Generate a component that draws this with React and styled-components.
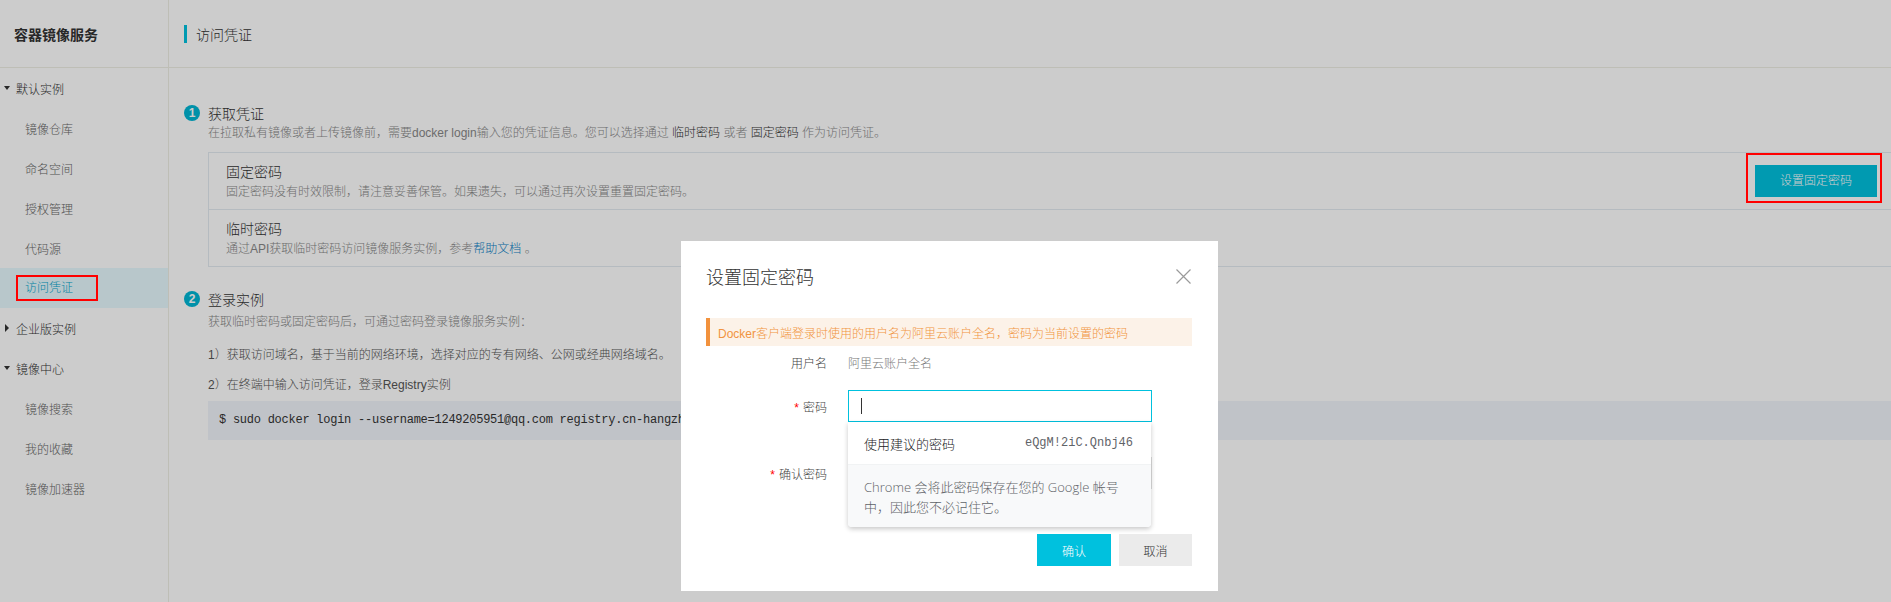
import styled, { createGlobalStyle } from 'styled-components'

const GlobalStyle = createGlobalStyle`
  * {
    box-sizing: border-box;
  }

  body {
    margin: 0;
    background: #fff;
    color: #333;
    font-family: "Liberation Sans", "Noto Sans CJK SC", sans-serif;
    font-size: 12px;
    font-weight: 300;
  }
`

const Page = styled.div`
  display: grid;
  grid-template-columns: 169px 1fr;
  height: 602px;
  overflow: hidden;
`

const Sidebar = styled.aside`
  border-right: 1px solid #eeeee4;
`

const Brand = styled.div`
  height: 68px;
  display: flex;
  align-items: center;
  padding-left: 14px;
  border-bottom: 1px solid #eeeee4;
  font-size: 14px;
  font-weight: bold;
`

const GroupRow = styled.div`
  height: 40px;
  display: flex;
  align-items: center;
  padding-left: 3px;
  gap: 6px;
  color: #333;
`

const Arrow = styled.span`
  width: 7px;
  display: flex;
  justify-content: center;

  &::before {
    content: '';
    width: 0;
    height: 0;
    ${props => props.$open
      ? `border-left: 3.5px solid transparent;
         border-right: 3.5px solid transparent;
         border-top: 4px solid #333;`
      : `border-top: 4px solid transparent;
         border-bottom: 4px solid transparent;
         border-left: 4px solid #333;`}
  }
`

const Item = styled.div`
  height: 40px;
  display: flex;
  align-items: center;
  padding-left: 25px;
  color: ${props => props.$active ? '#00a6cc' : '#666'};
  background: ${props => props.$active ? '#e7f9fe' : 'transparent'};
`

// red annotation frame, drawn above the modal mask
const Mark = styled.span`
  position: relative;
  display: inline-block;
  line-height: 12px;
  padding: ${props => props.$pad};
  margin-left: ${props => props.$shift || '0'};

  &::after {
    content: '';
    position: absolute;
    inset: 0;
    border: 2px solid #ff0000;
    z-index: 1001;
    pointer-events: none;
  }
`

const Main = styled.main`
  min-width: 0;
`

const MainHeader = styled.div`
  height: 68px;
  display: flex;
  align-items: center;
  padding-left: 15px;
  border-bottom: 1px solid #eeeee4;
  font-size: 14px;

  &::before {
    content: '';
    width: 3px;
    height: 18px;
    margin-right: 9px;
    background: #00c1de;
  }
`

const Content = styled.div`
  padding: 35px 0 0 15px;
`

const StepHead = styled.div`
  display: flex;
  align-items: center;
  gap: 8px;
  height: 20px;
  font-size: 14px;
  margin-top: ${props => props.$gap || '0'};
`

const StepNum = styled.span`
  width: 16px;
  height: 16px;
  border-radius: 50%;
  background: #00b6d4;
  color: #fff;
  font-size: 12px;
  font-weight: bold;
  display: flex;
  align-items: center;
  justify-content: center;
`

const StepBody = styled.div`
  margin-left: 24px;
`

const Desc = styled.div`
  line-height: 20px;
  color: #888;
  margin-top: ${props => props.$gap || '0'};

  b {
    font-weight: 300;
    color: #333;
  }

  a {
    color: #0a80c6;
    text-decoration: none;
  }
`

const Line = styled.div`
  line-height: 20px;
  color: #555;
  margin-top: ${props => props.$gap};
`

const Box = styled.div`
  margin-top: 9px;
  margin-right: -4px;
  border: 1px solid #e3eaf0;
`

const BoxRow = styled.div`
  display: flex;
  justify-content: space-between;
  align-items: flex-start;

  & + & {
    border-top: 1px solid #e3eaf0;
  }
`

const BoxText = styled.div`
  padding: 9px 0 7px 17px;
`

const BoxTitle = styled.div`
  font-size: 14px;
  line-height: 20px;
  color: #333;
`

const PrimaryButton = styled.button`
  width: ${props => props.$w};
  height: 32px;
  border: none;
  background: #00c1de;
  color: #fff;
  font: inherit;
  font-size: 12px;
  padding: 0;
`

const GreyButton = styled(PrimaryButton)`
  background: #ebebeb;
  color: #333;
`

const ActionFrame = styled(Mark)`
  display: flex;
  margin-right: 12px;
`

const Code = styled.div`
  margin-top: 6px;
  height: 39px;
  line-height: 39px;
  padding-left: 11px;
  background: #f1f4fa;
  font-family: "Liberation Mono", monospace;
  font-size: 12px;
  font-weight: 400;
  letter-spacing: -0.25px;
  white-space: nowrap;
  overflow: hidden;
`

const Mask = styled.div`
  position: fixed;
  inset: 0;
  z-index: 1000;
  background: rgba(0, 0, 0, 0.2);
  padding: 241px 0 0 681px;
`

const Modal = styled.div`
  width: 537px;
  height: 350px;
  background: #fff;
  padding: 23px 26px 25px 25px;
  display: flex;
  flex-direction: column;
`

const ModalHead = styled.div`
  height: 24px;
  display: flex;
  align-items: center;
  justify-content: space-between;
  font-size: 18px;
  color: #333;
`

const Alert = styled.div`
  margin-top: 30px;
  height: 28px;
  display: flex;
  align-items: center;
  padding-left: 8px;
  border-left: 4px solid #f2923d;
  background: #fcf2e8;
  color: #f19440;
`

const FormRow = styled.div`
  display: flex;
  align-items: center;
  gap: 21px;
  height: 32px;
  margin-top: ${props => props.$gap || '0'};
`

const Label = styled.div`
  width: 121px;
  text-align: right;
  color: #444;

  i {
    font-style: normal;
    color: #ff0000;
    margin-right: 4px;
  }
`

const Value = styled.div`
  color: #777;
`

const Control = styled.div`
  position: relative;
  width: 304px;
`

const Field = styled.div`
  height: 32px;
  display: flex;
  align-items: center;
  padding-left: 12px;
  border: 1px solid ${props => props.$focus ? '#00c1de' : '#dcdcdc'};
`

const Caret = styled.span`
  width: 1px;
  height: 16px;
  background: #333;
`

const Suggest = styled.div`
  position: absolute;
  top: 100%;
  left: 0;
  width: 303px;
  z-index: 2;
  background: #fff;
  border-radius: 0 0 4px 4px;
  overflow: hidden;
  box-shadow: 0 2px 5px rgba(0, 0, 0, 0.22);
  font-family: "Open Sans", "Noto Sans CJK SC", sans-serif;
  font-size: 13px;
`

const SuggestRow = styled.div`
  height: 43px;
  display: flex;
  align-items: center;
  justify-content: space-between;
  padding: 0 18px 0 16px;
  color: #202124;
  border-bottom: 1px solid #f1f3f4;
`

const Pass = styled.span`
  font-family: "Liberation Mono", monospace;
  font-size: 12px;
  font-weight: 400;
  color: #5f6368;
`

const SuggestHint = styled.div`
  padding: 12px 16px 10px;
  line-height: 20px;
  background: #f8f9fa;
  color: #5f6368;
`

const ModalFoot = styled.div`
  margin-top: 45px;
  display: flex;
  justify-content: flex-end;
  gap: 8px;
`

const CloseIcon = () => (
  <svg width="15" height="15" viewBox="0 0 15 15" style={{ marginRight: 1 }}>
    <path d="M0.5 0.5 L14.5 14.5 M14.5 0.5 L0.5 14.5" stroke="#9a9a9a" strokeWidth="1.2" fill="none" />
  </svg>
)

const App = () => {
  return (
    <>
      <GlobalStyle />
      <Page>
        <Sidebar>
          <Brand>容器镜像服务</Brand>
          <GroupRow><Arrow $open />默认实例</GroupRow>
          <Item>镜像仓库</Item>
          <Item>命名空间</Item>
          <Item>授权管理</Item>
          <Item>代码源</Item>
          <Item $active><Mark $pad="7px 25px 7px 9px" $shift="-9px">访问凭证</Mark></Item>
          <GroupRow><Arrow />企业版实例</GroupRow>
          <GroupRow><Arrow $open />镜像中心</GroupRow>
          <Item>镜像搜索</Item>
          <Item>我的收藏</Item>
          <Item>镜像加速器</Item>
        </Sidebar>

        <Main>
          <MainHeader>访问凭证</MainHeader>
          <Content>
            <StepHead><StepNum>1</StepNum>获取凭证</StepHead>
            <StepBody>
              <Desc>在拉取私有镜像或者上传镜像前，需要docker login输入您的凭证信息。您可以选择通过 <b>临时密码</b> 或者 <b>固定密码</b> 作为访问凭证。</Desc>
              <Box>
                <BoxRow>
                  <BoxText>
                    <BoxTitle>固定密码</BoxTitle>
                    <Desc>固定密码没有时效限制，请注意妥善保管。如果遗失，可以通过再次设置重置固定密码。</Desc>
                  </BoxText>
                  <ActionFrame $pad="12px 5px 6px 9px">
                    <PrimaryButton $w="122px">设置固定密码</PrimaryButton>
                  </ActionFrame>
                </BoxRow>
                <BoxRow>
                  <BoxText>
                    <BoxTitle>临时密码</BoxTitle>
                    <Desc>通过API获取临时密码访问镜像服务实例，参考<a href="#">帮助文档</a> 。</Desc>
                  </BoxText>
                </BoxRow>
              </Box>
            </StepBody>

            <StepHead $gap="22px"><StepNum>2</StepNum>登录实例</StepHead>
            <StepBody>
              <Desc $gap="3px">获取临时密码或固定密码后，可通过密码登录镜像服务实例：</Desc>
              <Line $gap="13px">1）获取访问域名，基于当前的网络环境，选择对应的专有网络、公网或经典网络域名。</Line>
              <Line $gap="10px">2）在终端中输入访问凭证，登录Registry实例</Line>
              <Code>$ sudo docker login --username=1249205951@qq.com registry.cn-hangzhou.aliyuncs.com</Code>
            </StepBody>
          </Content>
        </Main>
      </Page>

      <Mask>
        <Modal>
          <ModalHead>
            设置固定密码
            <CloseIcon />
          </ModalHead>
          <Alert>Docker客户端登录时使用的用户名为阿里云账户全名，密码为当前设置的密码</Alert>

          <FormRow>
            <Label>用户名</Label>
            <Value>阿里云账户全名</Value>
          </FormRow>
          <FormRow $gap="12px">
            <Label><i>*</i>密码</Label>
            <Control>
              <Field $focus><Caret /></Field>
              <Suggest>
                <SuggestRow>
                  使用建议的密码
                  <Pass>eQgM!2iC.Qnbj46</Pass>
                </SuggestRow>
                <SuggestHint>Chrome 会将此密码保存在您的 Google 帐号<br />中，因此您不必记住它。</SuggestHint>
              </Suggest>
            </Control>
          </FormRow>
          <FormRow $gap="35px">
            <Label><i>*</i>确认密码</Label>
            <Control>
              <Field />
            </Control>
          </FormRow>

          <ModalFoot>
            <PrimaryButton $w="74px">确认</PrimaryButton>
            <GreyButton $w="73px">取消</GreyButton>
          </ModalFoot>
        </Modal>
      </Mask>
    </>
  )
}

export default App
